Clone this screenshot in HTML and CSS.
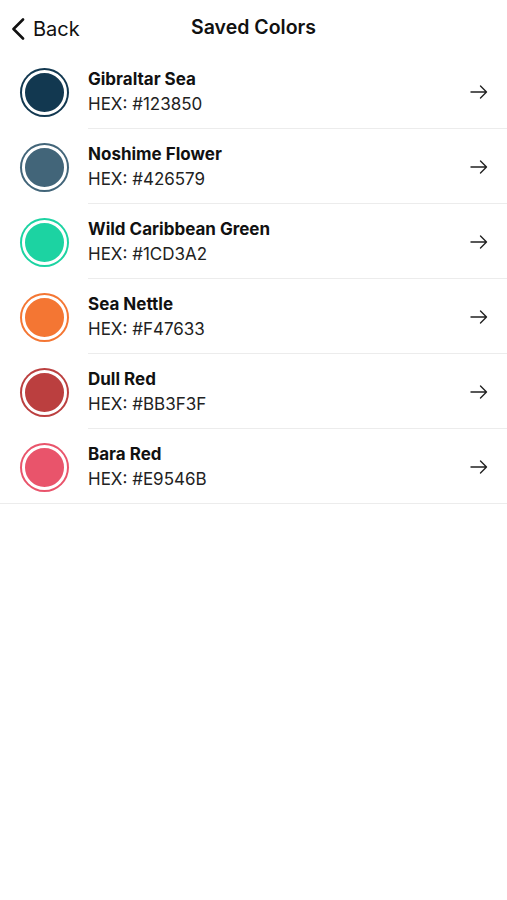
FILE: index.html
```html
<!DOCTYPE html>
<html>
<head>
<meta charset="utf-8">
<link rel="stylesheet" href="styles.css">
</head>
<body>

<!--Header-->
<div class="header">
  <a class="back" href="#">
    <svg class="chevron" width="14" height="22" viewBox="0 0 14 22">
      <path d="M12 1.5 L2.5 11 L12 20.5" fill="none" stroke="#111" stroke-width="2.6" stroke-linecap="round" stroke-linejoin="round"/>
    </svg>
    <span>Back</span>
  </a>
  <div class="title">Saved Colors</div>
</div>

<!--Color List-->
<ul class="colorList">
  <li class="colorRow">
    <div class="swatch" style="--c:#123850"></div>
    <div class="info">
      <div class="name">Gibraltar Sea</div>
      <div class="hex">HEX: #123850</div>
    </div>
    <svg class="arrow" width="18" height="14" viewBox="0 0 18 14"><path d="M1 7 H16.5 M10.5 1 L16.5 7 L10.5 13" fill="none" stroke="#222" stroke-width="1.4" stroke-linecap="round" stroke-linejoin="round"/></svg>
  </li>
  <li class="colorRow">
    <div class="swatch" style="--c:#426579"></div>
    <div class="info">
      <div class="name">Noshime Flower</div>
      <div class="hex">HEX: #426579</div>
    </div>
    <svg class="arrow" width="18" height="14" viewBox="0 0 18 14"><path d="M1 7 H16.5 M10.5 1 L16.5 7 L10.5 13" fill="none" stroke="#222" stroke-width="1.4" stroke-linecap="round" stroke-linejoin="round"/></svg>
  </li>
  <li class="colorRow">
    <div class="swatch" style="--c:#1CD3A2"></div>
    <div class="info">
      <div class="name">Wild Caribbean Green</div>
      <div class="hex">HEX: #1CD3A2</div>
    </div>
    <svg class="arrow" width="18" height="14" viewBox="0 0 18 14"><path d="M1 7 H16.5 M10.5 1 L16.5 7 L10.5 13" fill="none" stroke="#222" stroke-width="1.4" stroke-linecap="round" stroke-linejoin="round"/></svg>
  </li>
  <li class="colorRow">
    <div class="swatch" style="--c:#F47633"></div>
    <div class="info">
      <div class="name">Sea Nettle</div>
      <div class="hex">HEX: #F47633</div>
    </div>
    <svg class="arrow" width="18" height="14" viewBox="0 0 18 14"><path d="M1 7 H16.5 M10.5 1 L16.5 7 L10.5 13" fill="none" stroke="#222" stroke-width="1.4" stroke-linecap="round" stroke-linejoin="round"/></svg>
  </li>
  <li class="colorRow">
    <div class="swatch" style="--c:#BB3F3F"></div>
    <div class="info">
      <div class="name">Dull Red</div>
      <div class="hex">HEX: #BB3F3F</div>
    </div>
    <svg class="arrow" width="18" height="14" viewBox="0 0 18 14"><path d="M1 7 H16.5 M10.5 1 L16.5 7 L10.5 13" fill="none" stroke="#222" stroke-width="1.4" stroke-linecap="round" stroke-linejoin="round"/></svg>
  </li>
  <li class="colorRow last">
    <div class="swatch" style="--c:#E9546B"></div>
    <div class="info">
      <div class="name">Bara Red</div>
      <div class="hex">HEX: #E9546B</div>
    </div>
    <svg class="arrow" width="18" height="14" viewBox="0 0 18 14"><path d="M1 7 H16.5 M10.5 1 L16.5 7 L10.5 13" fill="none" stroke="#222" stroke-width="1.4" stroke-linecap="round" stroke-linejoin="round"/></svg>
  </li>
</ul>

</body>
</html>
```

FILE: styles.css
```css
body {
  margin: 0;
  background-color: #fff;
  font-family: Inter, "Liberation Sans", sans-serif;
  color: #111;
}

/* Header */
.header {
  position: relative;
  height: 54px;
  display: flex;
  align-items: center;
  justify-content: center;
}

.back {
  position: absolute;
  left: 11px;
  top: 17px;
  display: flex;
  align-items: center;
  gap: 8px;
  color: #111;
  text-decoration: none;
  font-size: 20px;
}

.title {
  font-size: 19.5px;
  font-weight: 600;
}

/* List */
.colorList {
  list-style-type: none;
  margin: 0;
  padding: 0;
}

.colorRow {
  height: 75px;
  display: flex;
  align-items: center;
  position: relative;
}

.colorRow::after {
  content: "";
  position: absolute;
  left: 88px;
  right: 0;
  bottom: 0;
  height: 1px;
  background-color: #ececec;
}

.colorRow.last::after {
  left: 0;
}

.swatch {
  width: 39px;
  height: 39px;
  margin-left: 22px;
  margin-top: 1px;
  border-radius: 50%;
  background-color: var(--c);
  border: 3px solid #fff;
  box-shadow: 0 0 0 2px var(--c);
}

.info {
  margin-left: 21px;
  flex: 1;
}

.name {
  font-size: 17px;
  font-weight: 700;
  line-height: 20px;
}

.hex {
  font-size: 17px;
  line-height: 20px;
  margin-top: 5px;
  color: #222;
}

.arrow {
  margin-right: 19px;
  margin-top: 1px;
}
```
